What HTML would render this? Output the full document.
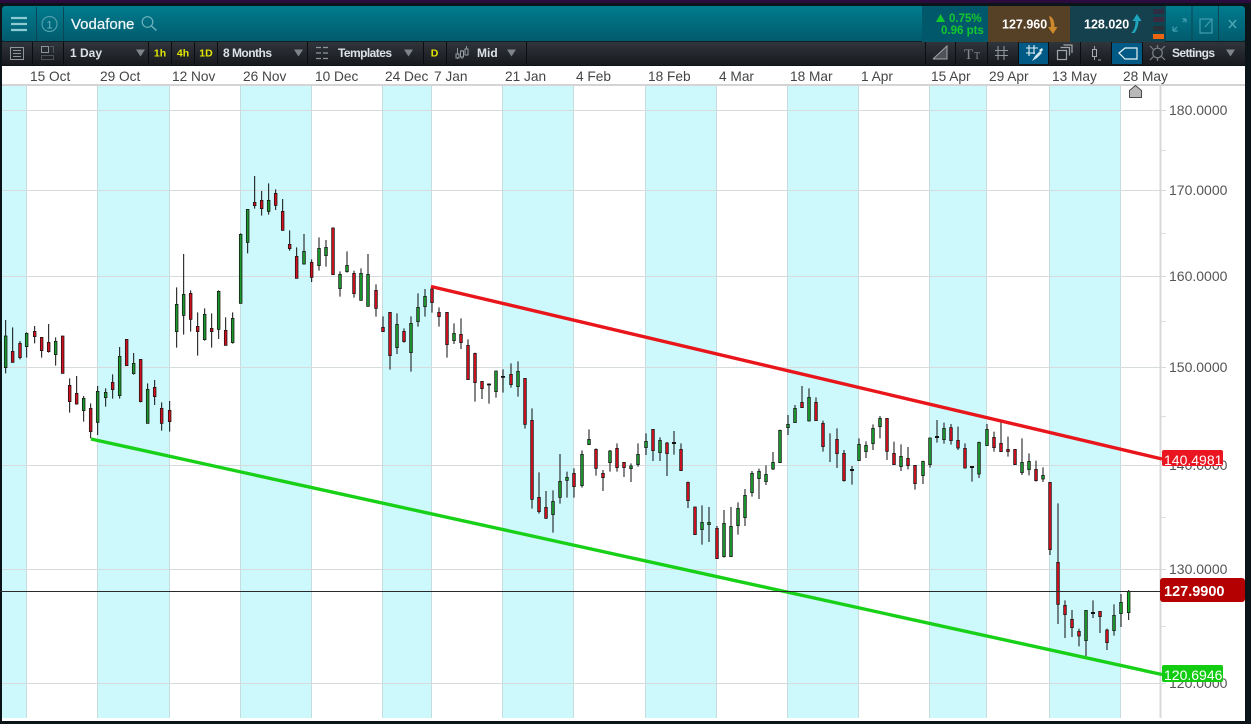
<!DOCTYPE html>
<html><head><meta charset="utf-8"><style>
html,body{margin:0;padding:0;width:1251px;height:724px;overflow:hidden;background:#0b1519}
svg{display:block;position:absolute;left:0;top:0}
text{font-family:"Liberation Sans",sans-serif}
.d{font-size:13.7px;fill:#444}
.a{font-size:14px;fill:#555}
.t{font-size:12px;font-weight:bold;fill:#dde2e6}
.y{font-size:10.5px;font-weight:bold;fill:#e2e600;text-anchor:middle}
.p{font-size:12.5px;font-weight:bold;fill:#fff}
.c path{stroke-width:2.2;stroke:#141414}
.c path[fill="none"]{stroke-width:3;stroke:#0c0c0c}
</style></head><body>
<svg width="1251" height="724" viewBox="0 0 1251 724">
<defs>
<linearGradient id="h" x1="0" y1="0" x2="0" y2="1"><stop offset="0" stop-color="#017b8e"/><stop offset="1" stop-color="#015a6c"/></linearGradient>
<linearGradient id="tb" x1="0" y1="0" x2="0" y2="1"><stop offset="0" stop-color="#30353c"/><stop offset="1" stop-color="#17191d"/></linearGradient>
</defs>
<rect width="1251" height="724" fill="#0b1519"/>
<rect width="1251" height="3" fill="#2c0c3e"/>
<rect x="2" y="6" width="1243" height="36" rx="3" fill="url(#h)"/>
<rect x="2" y="42" width="1243" height="23" fill="url(#tb)"/>
<rect x="2" y="41" width="1243" height="1" fill="#0f2026"/>
<rect x="2" y="66" width="1243" height="655" fill="#fff"/>
<rect x="2" y="84" width="1243" height="2" fill="#d4d4d4"/>

<!-- zones -->
<g fill="#cdf9fc">
<rect x="2" y="86" width="24" height="632"/><rect x="97" y="86" width="72" height="632"/><rect x="240" y="86" width="71" height="632"/><rect x="382" y="86" width="49" height="632"/><rect x="502" y="86" width="71" height="632"/><rect x="645" y="86" width="71" height="632"/><rect x="787" y="86" width="71" height="632"/><rect x="929" y="86" width="57" height="632"/><rect x="1049" y="86" width="71" height="632"/>
</g>
<path d="M26.5 86V718M97.5 86V718M169.5 86V718M240.5 86V718M311.5 86V718M382.5 86V718M431.5 86V718M502.5 86V718M573.5 86V718M645.5 86V718M716.5 86V718M787.5 86V718M858.5 86V718M929.5 86V718M986.5 86V718M1049.5 86V718M1120.5 86V718" stroke="#c6dcdf" stroke-width="1" fill="none"/>
<path d="M2 110.5H1166M2 190.5H1166M2 276.5H1166M2 367.5H1166M2 465.5H1166M2 569.5H1166M2 683.5H1166" stroke="#d6dcdc" stroke-width="1" fill="none"/>
<path d="M1161 150.5h5M1161 233.5h5M1161 321.5h5M1161 416.5h5M1161 517.5h5M1161 626.5h5" stroke="#dddddd" stroke-width="1" fill="none"/>
<rect x="1159.5" y="86" width="2" height="632" fill="#d8d8d8"/>

<!-- candles group A -->
<g class="c" transform="translate(0,170) scale(.33333)">
<path fill="none" d="M17 450V610M38 472V578M60 513V568M80 487V563M104 468V520M125 502V563M146 462V548M167 502V587M188 498V610M209 625V728M230 618V704M251 678V755M272 700V805M293 648V795M317 655V710M338 613V686M359 531V686M380 508V587M401 549V614M422 568V697M443 640V760M464 630V705M485 697V782M509 693V785M530 352V533M551 252V494M572 361V485M593 427V557M614 415V512M635 430V533M656 361V507M677 442V527M698 427V521M722 190V400M743 117V250M764 18V116M785 63V137M806 40V134M827 58V120M848 87V182M869 181V242M890 232V325"/>
<path fill="#1b962c" d="M13 498h8v95h-8zM76 490h8v40h-8zM163 514h8v40h-8zM247 685h8v37h-8zM289 664h8v93h-8zM313 667h8v16h-8zM355 559h8v118h-8zM397 580h8v31h-8zM439 658h8v102h-8zM526 403h8v82h-8zM547 373h8v63h-8zM610 433h8v76h-8zM652 364h8v114h-8zM694 445h8v73h-8zM718 193h8v207h-8zM739 118h8v99h-8zM802 91h8v33h-8z"/>
<path fill="#d0101e" d="M34 544h8v33h-8zM56 520h8v43h-8zM100 484h8v16h-8zM121 502h8v40h-8zM142 517h8v28h-8zM184 498h8v112h-8zM205 646h8v49h-8zM226 670h8v32h-8zM268 715h8v70h-8zM334 637h8v22h-8zM376 508h8v79h-8zM418 568h8v127h-8zM460 652h8v28h-8zM481 715h8v45h-8zM505 721h8v34h-8zM568 370h8v78h-8zM589 469h8v16h-8zM631 475h8v10h-8zM673 481h8v45h-8zM760 97h8v10h-8zM781 91h8v25h-8zM823 70h8v36h-8zM844 124h8v57h-8zM865 223h8v13h-8zM886 259h8v66h-8z"/>
</g>
<!-- group B -->
<g class="c" transform="translate(290,220) scale(.33333)">
<path fill="none" d="M42 42V134M65 118V186M87 52V152M108 60V140M129 22V164M150 154V230M171 94V158M192 152V233M213 145V242M234 102V260M258 193V290M279 289V335M300 277V449M321 280V402M342 325V368M363 289V455M384 220V320M405 207V290M426 200V278M447 262V320M471 277V413M492 310V372M513 295V387M534 358V480M555 398V545M576 484V537M597 490V551M618 452V533M639 448V518M663 430V503M684 424V530M705 475V626M726 565V866M747 757V881M768 813V896M789 811V938M810 702V851M831 755V833M852 745V833M876 691V803"/>
<path fill="#1b962c" d="M38 94h8v38h-8zM83 85h8v52h-8zM104 82h8v25h-8zM146 163h8v43h-8zM167 136h8v19h-8zM209 160h8v81h-8zM230 163h8v96h-8zM317 313h8v70h-8zM359 310h8v88h-8zM380 262h8v43h-8zM401 229h8v31h-8zM488 340h8v22h-8zM614 453h8v62h-8zM680 454h8v46h-8zM785 844h8v40h-8zM806 784h8v48h-8zM827 772h8v9h-8zM872 703h8v94h-8z"/>
<path fill="#d0101e" d="M61 127h8v45h-8zM125 24h8v140h-8zM188 160h8v61h-8zM254 211h8v54h-8zM275 322h8v13h-8zM296 277h8v130h-8zM338 334h8v31h-8zM422 207h8v41h-8zM443 277h8v13h-8zM467 277h8v97h-8zM509 343h8v25h-8zM530 376h8v103h-8zM551 400h8v88h-8zM572 484h8v22h-8zM659 463h8v31h-8zM701 475h8v138h-8zM722 601h8v237h-8zM743 832h8v43h-8zM764 862h8v33h-8zM848 760h8v40h-8z"/>
<path fill="#111" d="M592 492h10v3h-10zM634 469h10v3h-10z"/>
</g>
<!-- group C -->
<g class="c" transform="translate(580,380) scale(.33333)">
<path fill="none" d="M27 148V194M48 205V287M69 270V333M90 210V275M111 190V275M132 247V291M153 250V306M174 190V260M198 160V225M219 147V243M240 172V243M261 186V288M282 153V224M303 190V272M324 305V384M345 380V464M366 376V494M387 381V486M411 438V536M432 390V533M453 381V530M474 367V464M495 327V438M516 273V350M537 266V357M558 256V315M579 216V270M600 149V248M624 105V165M645 75V128M666 18V83M687 25V124M708 52V122M729 122V215M750 160V246M771 145V264M792 210V305M816 258V314M837 175V242M858 184V234M879 133V210M900 108V175"/>
<path fill="#1b962c" d="M23 178h8v16h-8zM86 213h8v35h-8zM149 258h8v8h-8zM170 223h8v31h-8zM194 184h8v19h-8zM236 181h8v37h-8zM362 427h8v22h-8zM383 427h8v7h-8zM428 430h8v100h-8zM449 439h8v91h-8zM470 385h8v52h-8zM491 346h8v67h-8zM512 280h8v58h-8zM533 274h8v22h-8zM554 283h8v22h-8zM575 247h8v20h-8zM596 151h8v97h-8zM620 133h8v10h-8zM641 85h8v43h-8zM683 52h8v71h-8zM833 193h8v49h-8zM854 196h8v19h-8zM875 145h8v46h-8zM896 115h8v25h-8z"/>
<path fill="#d0101e" d="M44 208h8v57h-8zM65 280h8v13h-8zM107 205h8v58h-8zM128 247h8v16h-8zM215 148h8v64h-8zM257 189h8v32h-8zM299 208h8v64h-8zM320 307h8v55h-8zM341 381h8v83h-8zM407 445h8v91h-8zM662 67h8v16h-8zM704 67h8v55h-8zM725 130h8v70h-8zM767 178h8v43h-8zM788 220h8v82h-8z"/>
<path fill="#111" d="M277 187h10v4h-10zM811 268h10v4h-10z"/>
</g>
<!-- group D -->
<g class="c" transform="translate(860,400) scale(.33333)">
<path fill="none" d="M81 55V180M102 125V195M123 133V213M144 141V208M165 196V269M189 182V252M210 113V203M231 60V128M252 68V131M273 72V134M294 80V150M315 130V206M336 198V245M357 125V234M381 72V137M402 95V155M423 62V155M444 110V170M465 148V194M486 115V225M507 160V226M528 182V245M549 202V246M570 247V465M594 310V672M615 601V714M636 630V711M657 686V739M678 630V768M699 601V654M720 634V699M741 686V750M762 613V707M783 582V681M806 570V660"/>
<path fill="#1b962c" d="M119 169h8v31h-8zM185 184h8v43h-8zM206 114h8v80h-8zM248 85h8v34h-8zM353 127h8v95h-8zM377 88h8v49h-8zM482 187h8v31h-8zM503 184h8v25h-8zM545 226h8v11h-8zM674 631h8v91h-8zM758 646h8v46h-8zM779 607h8v34h-8z"/>
<path fill="#16b026" d="M802 574h8v64h-8z"/>
<path fill="#d0101e" d="M77 55h8v99h-8zM98 160h8v34h-8zM140 175h8v22h-8zM161 196h8v55h-8zM269 83h8v39h-8zM290 121h8v23h-8zM311 145h8v59h-8zM398 112h8v31h-8zM419 130h8v25h-8zM440 148h8v7h-8zM461 148h8v46h-8zM524 208h8v34h-8zM566 247h8v202h-8zM590 487h8v126h-8zM611 616h8v28h-8zM632 658h8v25h-8zM653 694h8v14h-8zM716 634h8v16h-8zM737 690h8v38h-8z"/>
<path fill="#111" d="M226 109h10v4h-10zM331 199h10v4h-10zM694 637h10v4h-10z"/>
</g>

<!-- trend lines -->
<line x1="431" y1="286.5" x2="1162" y2="459" stroke="#e8151b" stroke-width="3.4"/>
<line x1="91" y1="439" x2="1162" y2="674.5" stroke="#18d018" stroke-width="3.4"/>
<line x1="0" y1="591.5" x2="1160" y2="591.5" stroke="#2a2a2a" stroke-width="1"/>

<!-- date axis -->
<text class="d" x="30" y="81">15 Oct</text><text class="d" x="100" y="81">29 Oct</text><text class="d" x="172" y="81">12 Nov</text><text class="d" x="243" y="81">26 Nov</text><text class="d" x="315" y="81">10 Dec</text><text class="d" x="385" y="81">24 Dec</text><text class="d" x="434" y="81">7 Jan</text><text class="d" x="505" y="81">21 Jan</text><text class="d" x="576" y="81">4 Feb</text><text class="d" x="648" y="81">18 Feb</text><text class="d" x="719" y="81">4 Mar</text><text class="d" x="790" y="81">18 Mar</text><text class="d" x="861" y="81">1 Apr</text><text class="d" x="931" y="81">15 Apr</text><text class="d" x="989" y="81">29 Apr</text><text class="d" x="1052" y="81">13 May</text><text class="d" x="1123" y="81">28 May</text>
<!-- marker -->
<path d="M1129.5 97.5V90.5L1135.5 85.5L1141.5 90.5V97.5Z" fill="#b9b9b9" stroke="#4a4a4a" stroke-width="1"/>

<!-- price axis -->
<text class="a" x="1169" y="115">180.0000</text>
<text class="a" x="1169" y="195">170.0000</text>
<text class="a" x="1169" y="281">160.0000</text>
<text class="a" x="1169" y="372">150.0000</text>
<text class="a" x="1169" y="470">140.0000</text>
<text class="a" x="1169" y="574">130.0000</text>
<text class="a" x="1169" y="688">120.0000</text>

<rect x="1162" y="450" width="61" height="16" rx="2" fill="#ea1520"/>
<text x="1164" y="465" font-size="14" fill="#fff">140.4981</text>
<rect x="1162" y="665" width="61" height="17" rx="2" fill="#12cc12"/>
<text x="1164" y="680" font-size="14" fill="#fff">120.6946</text>
<rect x="1160" y="578" width="85" height="24" rx="3" fill="#b40000"/>
<text x="1164" y="596" font-size="14.5" font-weight="bold" fill="#fff">127.9900</text>

<!-- header left -->
<path d="M36.5 7V41M63.5 7V41" stroke="#0a4653" stroke-width="1"/>
<path d="M11 18h16M11 24h16M11 30h16" stroke="#8ccbd3" stroke-width="2.2"/>
<circle cx="49.5" cy="24" r="7.5" fill="none" stroke="#4f9fae" stroke-width="1.2"/>
<text x="49.5" y="28.5" font-size="11" fill="#6fb5c1" text-anchor="middle">1</text>
<text x="71" y="29" font-size="15" fill="#eef6f7" stroke="#eef6f7" stroke-width=".25">Vodafone</text>
<circle cx="147.5" cy="22" r="5.3" fill="none" stroke="#6fb3bf" stroke-width="1.2"/>
<path d="M151.5 26L156.5 30.5" stroke="#6fb3bf" stroke-width="1.4"/>

<!-- header right -->
<rect x="922" y="6" width="66" height="36" fill="#02586b"/>
<rect x="988" y="6" width="82" height="36" fill="#574126"/>
<rect x="1070" y="6" width="82" height="36" fill="#15414e"/>
<rect x="1152" y="6" width="13" height="36" fill="#0e4450"/>
<path d="M1165.5 6V41M1192 6V41M1218.5 6V41" stroke="#0a4653" stroke-width="1"/>
<path d="M936 22l4.500-8 4.500 8z" fill="#12c82e"/>
<text x="949" y="22" font-size="11.500" font-weight="bold" fill="#12c82e">0.75%</text>
<text x="941" y="34" font-size="11.500" font-weight="bold" fill="#12c82e">0.96 pts</text>
<text class="p" x="1002" y="28.500">127.960</text>
<path d="M1049 16c4 1 5.500 5 5.500 11h3l-4.500 7-5-7h3c0-4-1-7-2-11z" fill="#cc8a2a"/>
<text class="p" x="1084" y="28.500">128.020</text>
<path d="M1131 33c3-2 4.500-7 4.500-12h-3l4.500-7 4.500 7h-3c0 5-2 9-4 12z" fill="#1fa5bb"/>
<rect x="1153" y="9" width="11" height="5" fill="#2c2c42"/><rect x="1153" y="17" width="11" height="5" fill="#3a2b40"/><rect x="1153" y="26" width="11" height="5" fill="#2a3038"/><rect x="1153" y="34" width="11" height="5" fill="#ec6510"/>
<path d="M1173 31l4-4M1173 31v-4.500M1173 31h4.500M1186 19l-3 3M1186 19v3.500M1186 19h-3.500" stroke="#3a9aab" stroke-width="1.400" fill="none"/>
<path d="M1209 19h-9v14h12v-9M1205 27l7-8M1207 19h5v5" stroke="#3f9eae" stroke-width="1.200" fill="none"/>
<path d="M1229 20l7 8M1236 20l-7 8" stroke="#4fa5b3" stroke-width="1.500"/>

<!-- toolbar left -->
<path d="M32.500 42V64M63.500 42V64M148.500 42V64M171.500 42V64M194.500 42V64M217.500 42V64M307.500 42V64M423.500 42V64M446.500 42V64M526.500 42V64M925.500 42V64M955.500 42V64M987.500 42V64M1018.500 42V64M1048.500 42V64M1080.500 42V64M1111.500 42V64M1142.500 42V64" stroke="#0c0d0f" stroke-width="1"/>
<rect x="10.500" y="47.500" width="13" height="12" fill="none" stroke="#8f959a" stroke-width="1"/>
<path d="M13 50.500h8M13 53.500h8M13 56.500h8" stroke="#8f959a" stroke-width="1"/>
<rect x="41.500" y="46.500" width="7" height="6" fill="none" stroke="#8f959a" stroke-width="1"/>
<path d="M41.500 55.500H53.500V59.500H41.500ZM50.500 46.500H53.500V52.500" fill="none" stroke="#7d8388" stroke-width="1" stroke-dasharray="1 1"/>
<text class="t" x="70" y="57">1 Day</text>
<path d="M136 49.500h9l-4.500 7z" fill="#7f8488"/>
<text class="y" x="160" y="56.500">1h</text><text class="y" x="183" y="56.500">4h</text><text class="y" x="206" y="56.500">1D</text>
<text class="t" x="223" y="57" textLength="49">8 Months</text>
<path d="M294 49.500h9l-4.500 7z" fill="#7f8488"/>
<path d="M316 47.500h14M316 53h14M316 58.500h14" stroke="#8f959a" stroke-width="1.300" stroke-dasharray="5 2"/>
<text class="t" x="338" y="57" textLength="54">Templates</text>
<path d="M404 49.500h9l-4.500 7z" fill="#7f8488"/>
<text class="y" x="434.500" y="56.500">D</text>
<path d="M457.500 48v11M462 50v9M466.500 46v9" stroke="#8f959a" stroke-width="1"/>
<rect x="456" y="54" width="3" height="4" fill="#23272c" stroke="#9ba0a5" stroke-width="1"/>
<rect x="460.500" y="51" width="3" height="6" fill="#23272c" stroke="#9ba0a5" stroke-width="1"/>
<rect x="465" y="49" width="3" height="6" fill="#23272c" stroke="#9ba0a5" stroke-width="1"/>
<text class="t" x="477" y="57">Mid</text>
<path d="M507 49.500h9l-4.500 7z" fill="#7f8488"/>

<!-- toolbar right -->
<rect x="1019" y="43" width="29" height="21" fill="#015a85"/>
<rect x="1112" y="43" width="30" height="21" fill="#015a85"/>
<path d="M933 59h14V46z" fill="#4f5357"/><path d="M933 59L947 46V59H933" fill="none" stroke="#a3a7aa" stroke-width="1"/>
<text x="964" y="59" font-size="15" fill="#858a8e" style="font-family:'Liberation Serif',serif">T</text>
<text x="974" y="59" font-size="10" fill="#858a8e" style="font-family:'Liberation Serif',serif">T</text>
<path d="M998 46v14M1004 46v14M995 50.500h13M995 55.500h13" stroke="#8f959a" stroke-width="1.100"/>
<path d="M1029 45v11M1034 45v9M1026 48h12M1026 53h9" stroke="#e8f2f6" stroke-width="1.100"/>
<path d="M1032 61l3-5 5-5 2 2-5 5z" fill="#cfe6ef"/><path d="M1039 50l3-2 1 2-2 2z" fill="#e8f2f6"/>
<rect x="1057.500" y="50.500" width="9" height="9" fill="none" stroke="#a0a5a9" stroke-width="1.200"/>
<path d="M1060.500 47.500h9v8M1063.500 45h8.500v8" fill="none" stroke="#a0a5a9" stroke-width="1.200"/>
<path d="M1094.500 46v14" stroke="#9ba0a5" stroke-width="1"/><rect x="1092.500" y="49.500" width="4" height="7" fill="#25292e" stroke="#a9adb0" stroke-width="1"/><path d="M1098 60h3" stroke="#9ba0a5"/>
<path d="M1119 53l6-5h12v11h-12z" fill="none" stroke="#e8f2f6" stroke-width="1.200"/>
<circle cx="1157.500" cy="53" r="4.800" fill="none" stroke="#7c8186" stroke-width="1.200"/>
<path d="M1150 46l3.500 3.500M1165 46l-3.500 3.500M1150 60l3.500-3.500M1165 60l-3.500-3.500M1157.500 45v3M1157.500 58v3" stroke="#7c8186" stroke-width="1.200"/>
<text class="t" x="1172" y="57" textLength="43">Settings</text>
<path d="M1226 49.500h9l-4.500 7z" fill="#7f8488"/>
</svg>
</body></html>
